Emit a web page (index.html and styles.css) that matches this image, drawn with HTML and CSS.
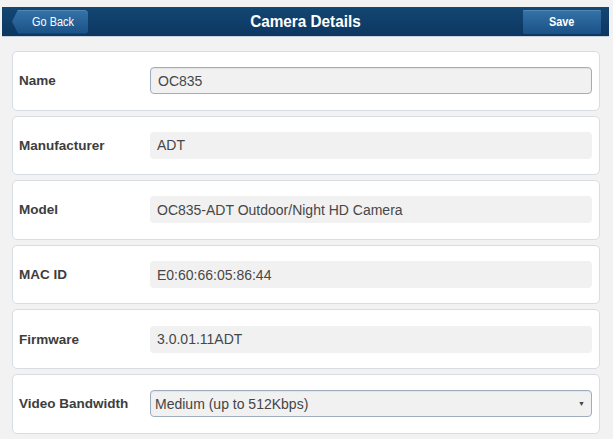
FILE: index.html
```html
<!DOCTYPE html>
<html>
<head>
<meta charset="utf-8">
<link rel="stylesheet" href="styles.css">
</head>
<body>
<div class="header">
  <div class="hdr-left"><span class="btn back"><span class="btn-txt">Go Back</span></span></div>
  <div class="title"><span class="title-txt">Camera Details</span></div>
  <div class="hdr-right"><span class="btn save"><span class="btn-txt bold">Save</span></span></div>
</div>
<div class="content">
  <div class="card">
    <div class="label">Name</div>
    <div class="field input">OC835</div>
  </div>
  <div class="card">
    <div class="label">Manufacturer</div>
    <div class="field">ADT</div>
  </div>
  <div class="card">
    <div class="label">Model</div>
    <div class="field">OC835-ADT Outdoor/Night HD Camera</div>
  </div>
  <div class="card">
    <div class="label">MAC ID</div>
    <div class="field">E0:60:66:05:86:44</div>
  </div>
  <div class="card">
    <div class="label">Firmware</div>
    <div class="field">3.0.01.11ADT</div>
  </div>
  <div class="card">
    <div class="label">Video Bandwidth</div>
    <div class="field input select"><span>Medium (up to 512Kbps)</span><span class="arrow">&#9660;</span></div>
  </div>
</div>
</body>
</html>
```
FILE: styles.css
```css
html, body {
  margin: 0;
  padding: 0;
}
body {
  background: #f2f2f2;
  font-family: "Liberation Sans", Arial, sans-serif;
  width: 613px;
  height: 439px;
  overflow: hidden;
}
.header {
  margin: 7px 4px 0 2px;
  height: 29px;
  background: linear-gradient(#134673, #0c3761);
  display: grid;
  grid-template-columns: 1fr auto 1fr;
  align-items: center;
  box-shadow: 0 1px 0 #c9d2db;
}
.hdr-left {
  padding-left: 10px;
  display: flex;
}
.hdr-right {
  padding-right: 8px;
  display: flex;
  justify-content: flex-end;
}
.btn {
  height: 24px;
  display: flex;
  align-items: center;
  justify-content: center;
  background: linear-gradient(#3473a8, #1b5186);
  color: #ffffff;
  font-size: 12.5px;
  box-shadow: inset 0 1px 0 rgba(255,255,255,0.15);
}
.back {
  width: 76px;
  padding-left: 5px;
  box-sizing: border-box;
  border-radius: 0 4px 4px 0;
  clip-path: polygon(6px 0, 100% 0, 100% 100%, 6px 100%, 0 50%);
}
.save {
  width: 78px;
  border-radius: 1px;
}
.btn-txt {
  display: inline-block;
  transform: scaleX(0.87);
}
.bold {
  font-weight: bold;
}
.title {
  color: #ffffff;
  font-weight: bold;
  font-size: 17px;
  text-align: center;
}
.title-txt {
  display: inline-block;
  transform: scaleX(0.9);
}
.content {
  padding: 15px 13px 0 12px;
  display: flex;
  flex-direction: column;
  gap: 5px;
}
.card {
  height: 59.6px;
  box-sizing: border-box;
  background: #ffffff;
  border: 1px solid #d8dde3;
  border-radius: 5px;
  display: flex;
  align-items: center;
  padding: 0 7px 0 6px;
}
.label {
  width: 131px;
  flex: none;
  font-weight: bold;
  font-size: 13.5px;
  color: #3d3d3d;
}
.field {
  flex: 1;
  height: 27px;
  box-sizing: border-box;
  background: #f1f1f1;
  border-radius: 4px;
  display: flex;
  align-items: center;
  padding-left: 7px;
  font-size: 14px;
  color: #474747;
}
.input {
  border: 1px solid #9fadbf;
  padding-left: 7px;
  box-shadow: inset 0 1px 1px rgba(0,0,0,0.06);
}
.select {
  padding-left: 4px;
  padding-right: 6px;
  justify-content: space-between;
  color: #444;
}
.arrow {
  font-size: 7px;
  color: #444;
}
```
